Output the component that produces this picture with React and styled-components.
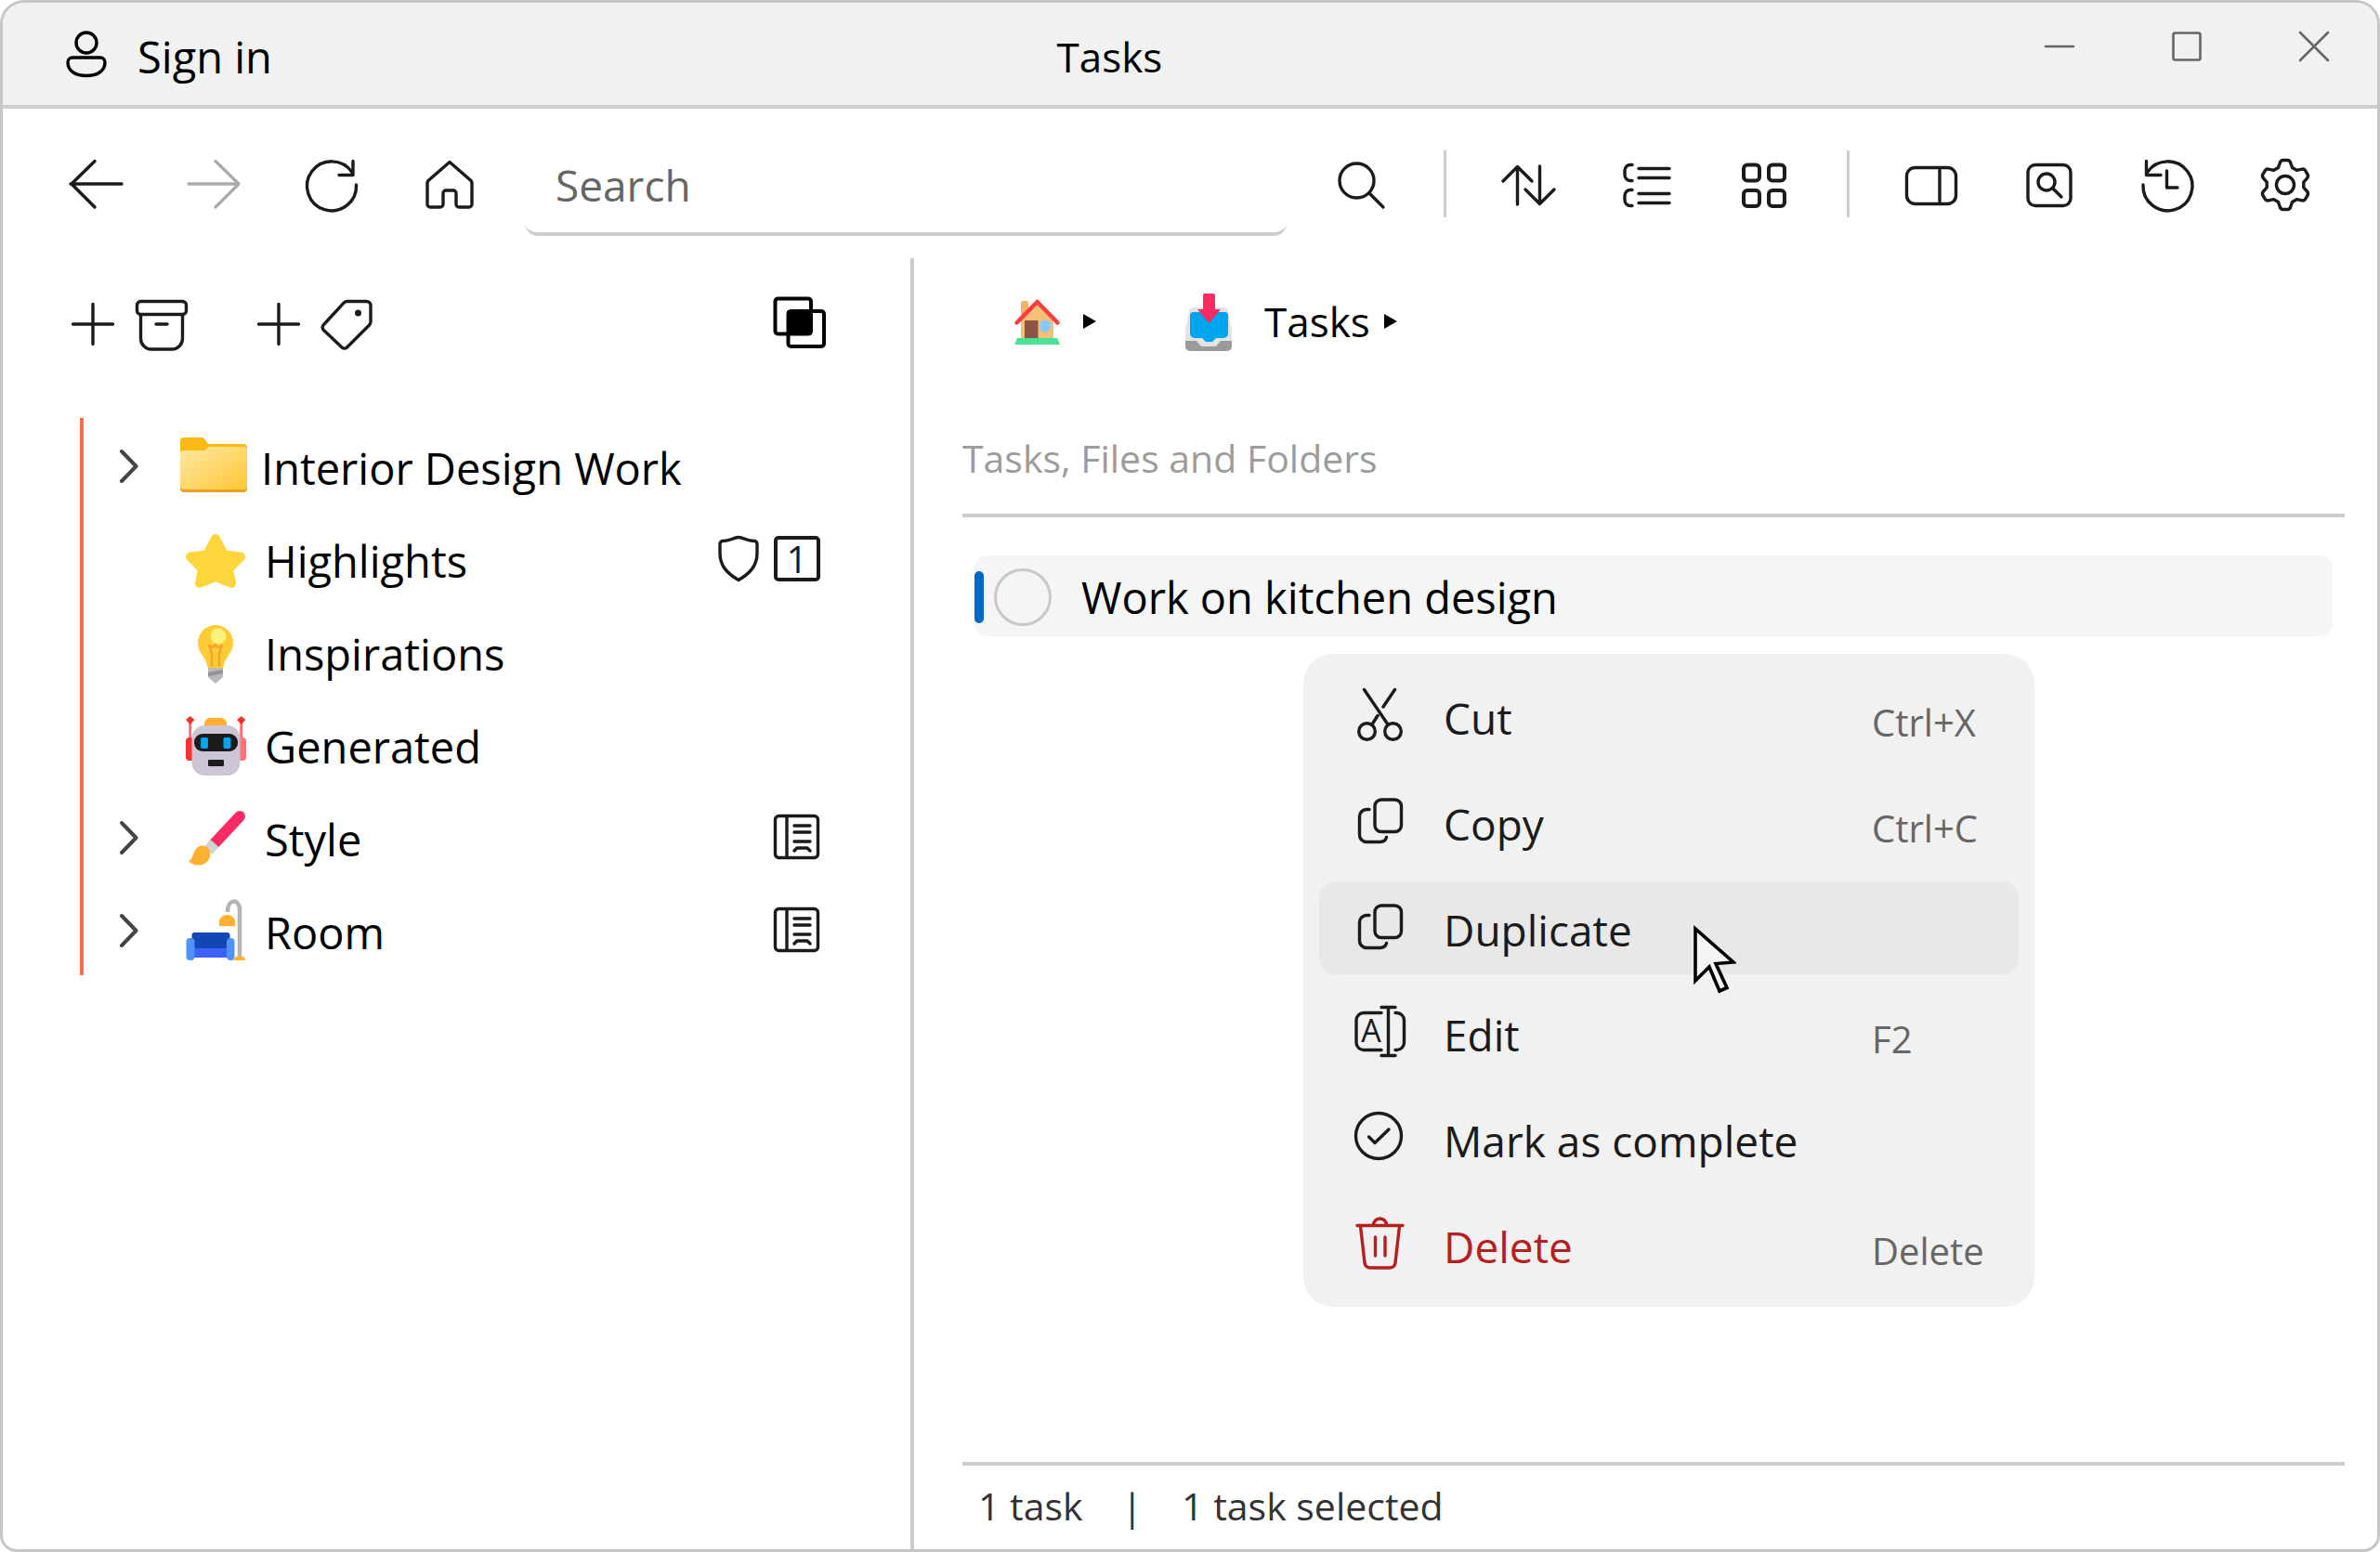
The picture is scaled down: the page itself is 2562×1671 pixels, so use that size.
import React from "react";
import styled, { createGlobalStyle } from "styled-components";

const color = {
  frame: "#c6c6c6",
  line: "#cdcdcd",
  chrome: "#f1f1f1",
  hover: "#e8e8e8",
  selected: "#f5f5f5",
  ink: "#1b1b1b",
  muted: "#666666",
  faint: "#9c9c9c",
  accent: "#0067c7",
  danger: "#b5201f",
  branch: "#fb6a50",
};

const text = {
  large: "47px",
  body: "46px",
  title: "44px",
  small: "41px",
  hint: "40px",
};

const GlobalStyle = createGlobalStyle`
  *, *::before, *::after { box-sizing: border-box; }
  body {
    margin: 0;
    background: #ffffff;
    color: #000000;
    font-family: "Open Sans", "Noto Sans", sans-serif;
    font-size: ${text.body};
    line-height: 60px;
  }
  button, input { font: inherit; color: inherit; }
  button { padding: 0; border: 0; background: none; text-align: left; cursor: pointer; }
  ul { margin: 0; padding: 0; list-style: none; }
`;

const Window = styled.div`
  display: flex;
  flex-direction: column;
  min-height: 100vh;
  border: 3px solid ${color.frame};
  border-radius: 26px 26px 18px 18px;
  background: #ffffff;
  overflow: hidden;
`;

/* ---------- icons ---------- */

const Glyph = styled.svg`
  display: block;
  flex: none;
  width: ${(p) => p.$w || 64}px;
  height: 64px;
  overflow: visible;
`;

const Line = ({ children, weight = 3.4 }) => (
  <Glyph
    viewBox="0 0 64 64"
    fill="none"
    stroke="currentColor"
    strokeWidth={weight}
    strokeLinecap="round"
    strokeLinejoin="round"
    aria-hidden="true"
  >
    {children}
  </Glyph>
);

const Emoji = ({ children, width = 80 }) => (
  <Glyph $w={width} viewBox={`0 0 ${width} 64`} aria-hidden="true">
    {children}
  </Glyph>
);

const UserIcon = () => (
  <Line>
    <circle cx="32" cy="20" r="11" />
    <path d="M17 36h30a5 5 0 0 1 5 5c0 10-9 14.500-20 14.500S12 51 12 41a5 5 0 0 1 5-5z" />
  </Line>
);
const MinimizeIcon = () => <Line weight={2.6}><path d="M17 32h30" /></Line>;
const MaximizeIcon = () => <Line weight={2.6}><rect x="17.500" y="17.500" width="29" height="29" rx="2" /></Line>;
const CloseIcon = () => <Line weight={2.6}><path d="M17 17l30 30M47 17L17 47" /></Line>;
const BackIcon = () => <Line><path d="M60 32H5M31 7.500L6 32l25 25" /></Line>;
const ForwardIcon = () => <Line><path d="M5 32h54M34 7.500L59 32 34 57" /></Line>;
const RefreshIcon = () => <Line><path d="M58.500 33a26.500 26.500 0 1 1-4.500-13.500M55 7.500v15H40" /></Line>;
const HomeIcon = () => (
  <Line>
    <path d="M32 8.500L9 28.500a4 4 0 0 0-1 3V54a3 3 0 0 0 3 3h11a3 3 0 0 0 3-3V42a3 3 0 0 1 3-3h8a3 3 0 0 1 3 3v12a3 3 0 0 0 3 3h11a3 3 0 0 0 3-3V31.500a4 4 0 0 0-1-3z" />
  </Line>
);
const SearchIcon = () => <Line><circle cx="27.500" cy="28.500" r="18.500" /><path d="M41 42l15 15" /></Line>;
const SortIcon = () => <Line><path d="M20.500 54V13.500M5 29l15.500-15.500L36 29M44.500 13v40.500M29 38l15.500 15.500L60 38" /></Line>;
const ListIcon = () => (
  <Line>
    <path d="M17 11.500h-2a6 6 0 0 0-6 6v5a6 6 0 0 0 6 6h2M17 38.500h-2a6 6 0 0 0-6 6v5a6 6 0 0 0 6 6h2M24 15.500h33M24 25.500h33M24 42.500h33M24 52.500h33" />
  </Line>
);
const GridIcon = () => (
  <Line weight={4}>
    <rect x="10" y="11.500" width="17" height="17" rx="4" />
    <rect x="37" y="11.500" width="17" height="17" rx="4" />
    <rect x="10" y="39" width="17" height="17" rx="4" />
    <rect x="37" y="39" width="17" height="17" rx="4" />
  </Line>
);
const PanelIcon = () => <Line><rect x="5.500" y="14.500" width="53" height="39" rx="9" /><path d="M41 15v38" /></Line>;
const FindIcon = () => (
  <Line>
    <rect x="9" y="11.500" width="46" height="44" rx="8" />
    <circle cx="29" cy="30" r="9" />
    <path d="M36 37l9 9" />
  </Line>
);
const HistoryIcon = () => <Line><path d="M6 33a26.500 26.500 0 1 0 4.500-13.500M9.500 7.500v15H25M31.500 18v18H43" /></Line>;

function mid(a, b, t) {
  const [ax, ay] = a.split(" ").map(Number);
  const [bx, by] = b.split(" ").map(Number);
  return `${(ax + (bx - ax) * t).toFixed(1)} ${(ay + (by - ay) * t).toFixed(1)}`;
}
const GEAR = (() => {
  const tooth = [[-7.5, -18.5], [-6, -23], [-5, -26.5], [5, -26.5], [6, -23], [7.5, -18.5]];
  let d = "";
  for (let i = 0; i < 6; i += 1) {
    const a = (i * Math.PI) / 3;
    const p = tooth.map(([x, y]) =>
      [32 + x * Math.cos(a) - y * Math.sin(a), 33 + x * Math.sin(a) + y * Math.cos(a)].map((n) => n.toFixed(1)).join(" ")
    );
    d += `${i ? "L" : "M"}${p[0]} L${p[1]} Q${p[2]} ${mid(p[2], p[3], 0.25)} L${mid(p[2], p[3], 0.75)} Q${p[3]} ${p[4]} L${p[5]} `;
  }
  return `${d}Z`;
})();
const GearIcon = () => <Line><path d={GEAR} /><circle cx="32" cy="33" r="9.500" /></Line>;

const PlusIcon = () => <Line><path d="M32 13.500v43M10.500 35h43" /></Line>;
const ArchiveIcon = () => (
  <Line>
    <rect x="5.500" y="10.500" width="53" height="14" rx="4" />
    <path d="M9.500 25v25.500a11.500 11.500 0 0 0 11.500 11.500h22a11.500 11.500 0 0 0 11.500-11.500V25M26 35h12" />
  </Line>
);
const TagIcon = () => (
  <Line>
    <path d="M31.500 10.500h21a4.500 4.500 0 0 1 4.500 4.500v17.500a5 5 0 0 1-1.500 3.500L31.500 60a4 4 0 0 1-5.500 0L6.500 41.500a4 4 0 0 1 0-6L28.500 11.700a4.500 4.500 0 0 1 3-1.200z" />
    <circle cx="43.500" cy="23" r="1.800" fill="currentColor" />
  </Line>
);
const OverlapIcon = () => (
  <Line weight={4}>
    <rect x="5.500" y="7.500" width="38.500" height="38" rx="3" />
    <rect x="19.500" y="21" width="38.500" height="38" rx="3" />
    <rect x="20" y="22" width="23" height="23" fill="currentColor" />
  </Line>
);
const ChevronIcon = () => <Line weight={4}><path d="M23 14L38.500 30 23 46" /></Line>;
const ShieldIcon = () => (
  <Line>
    <path d="M33 9.500c6 0 8 4 17 4a3 3 0 0 1 3 3v10c0 14-8 22-20 29-12-7-20-15-20-29v-10a3 3 0 0 1 3-3c9 0 11-4 17-4z" />
  </Line>
);
const BookIcon = () => (
  <Line>
    <rect x="8.500" y="9.500" width="46" height="45" rx="4" />
    <path d="M21 10v44M29 20h17M29 27h17M29 37h17M29 47l3-3h11l3 3" />
  </Line>
);
const CutIcon = () => (
  <Line>
    <circle cx="18.500" cy="48.500" r="8.800" />
    <circle cx="46.500" cy="48.500" r="8.800" />
    <path d="M15.500 3.500L41 41M48.500 3.500L36 22M30 31.500L24 41" />
  </Line>
);
const CopyIcon = () => (
  <Line>
    <rect x="27" y="8" width="28.500" height="34.500" rx="7" />
    <path d="M21 18.500h-3a7.500 7.500 0 0 0-7.500 7.500v20a7.500 7.500 0 0 0 7.500 7.500h14.500q5.500 0 7-5" />
  </Line>
);
const LetterA = styled.text`
  font-family: "Open Sans", sans-serif;
  font-size: 34px;
  fill: currentColor;
  stroke: none;
  text-anchor: middle;
`;
const RenameIcon = () => (
  <Line>
    <path d="M34 10.500H15a8 8 0 0 0-8 8v24a8 8 0 0 0 8 8h19M49 10.500h1.500a8 8 0 0 1 8 8v24a8 8 0 0 1-8 8H49M34 4.500h15M34 56.500h15M41.500 4.500v52" />
    <LetterA x="23" y="42">A</LetterA>
  </Line>
);
const CheckIcon = () => <Line><circle cx="31" cy="29" r="24.500" /><path d="M20.500 30l6.500 6.500L42 22" /></Line>;
const TrashIcon = () => (
  <Line>
    <path d="M8 11.500h49M25.500 11a7 7 0 0 1 14 0M11.500 12l4.500 39.500a6 6 0 0 0 6 5.500h21a6 6 0 0 0 6-5.500L53.500 12M27.500 24v20M38 24v20" />
  </Line>
);

/* ---------- emoji ---------- */

const FolderEmoji = () => (
  <Emoji width={76}>
    <defs>
      <linearGradient id="folderFront" x1="0" y1="0" x2="1" y2="1">
        <stop offset="0" stopColor="#ffe9a6" />
        <stop offset="1" stopColor="#ffc633" />
      </linearGradient>
    </defs>
    <path d="M2 3a4 4 0 0 1 4-4h19a4 4 0 0 1 3 1.500L32 6h38a4 4 0 0 1 4 4v20H2z" fill="#fbb917" />
    <path d="M2 17a4 4 0 0 1 4-4h22l5-4h37a4 4 0 0 1 4 4v41a4 4 0 0 1-4 4H6a4 4 0 0 1-4-4z" fill="#e9a21c" />
    <path d="M2 16a3 3 0 0 1 3-3h23l5-4h37a4 4 0 0 1 4 4v38a4 4 0 0 1-4 4H6a4 4 0 0 1-4-4z" fill="url(#folderFront)" />
  </Emoji>
);
const StarEmoji = () => (
  <Emoji>
    <path
      d="M40 8l9 17.500 18 2-13 13 3 15.500-17-7-17 7 3-15.500-13-13 18-2z"
      fill="#fed63b"
      stroke="#fed63b"
      strokeWidth="10"
      strokeLinejoin="round"
    />
  </Emoji>
);
const BulbEmoji = () => (
  <Emoji>
    <path d="M32 45h16v12l-8 7-8-7z" fill="#b9b9bd" />
    <path d="M32 52l16-3v4l-16 3z" fill="#929296" />
    <path d="M40 1a19 19 0 0 1 19 19c0 12-9 14-10.500 27h-17C30 34 21 32 21 20A19 19 0 0 1 40 1z" fill="#fdcb35" />
    <path d="M33 22l3 10v14M47 22l-3 10v14M33 22q3.500 6 7 0 3.500 6 7 0" fill="none" stroke="#f5a12c" strokeWidth="2.400" />
    <circle cx="43" cy="13" r="8.500" fill="#fff27a" />
  </Emoji>
);
const RobotEmoji = () => (
  <Emoji>
    <rect x="28" y="1" width="24" height="14" rx="6" fill="#ffb02e" />
    <path d="M12.700 3v24M67.700 3v24" stroke="#fb6f74" strokeWidth="3" />
    <path d="M8 3l4.700-4 4.700 4-4.700 5zM63 3l4.700-4 4.700 4-4.700 5z" fill="#f8312f" />
    <rect x="8" y="22" width="14" height="25" rx="4" fill="#f8312f" />
    <rect x="59" y="22" width="14" height="25" rx="4" fill="#ff7277" />
    <rect x="14.500" y="9" width="52" height="54" rx="14" fill="#cdc4d6" />
    <rect x="17" y="18" width="47" height="19" rx="9" fill="#1c1c1c" />
    <rect x="24" y="22" width="8" height="12" rx="2" fill="#00a6ed" />
    <rect x="48.500" y="22" width="8" height="12" rx="2" fill="#00a6ed" />
    <rect x="32" y="46" width="17" height="7" rx="1" fill="#1c1c1c" />
  </Emoji>
);
const BrushEmoji = () => (
  <Emoji>
    <path d="M66 7L38 37" stroke="#fc2b62" strokeWidth="12" strokeLinecap="round" />
    <path d="M39 36l-7 8" stroke="#d3d3d3" strokeWidth="12" />
    <path d="M11 55c6-2 4-13 12-16 7-2 13 4 11 11-2 10-16 13-23 5z" fill="#ffb02e" />
  </Emoji>
);
const SofaEmoji = () => (
  <Emoji>
    <path d="M53 10c0-15 12-14 13-4v52" fill="none" stroke="#b4b4b8" strokeWidth="4.500" />
    <path d="M44 25v-6a9 9 0 0 1 17 0v6z" fill="#ffb02e" />
    <path d="M60 62a6 5 0 0 1 12 0z" fill="#ffb02e" />
    <rect x="14.500" y="32" width="41" height="22" rx="3" fill="#1347b5" />
    <rect x="14.500" y="49" width="41" height="10" fill="#3f5fff" />
    <rect x="8.500" y="38" width="9" height="24" rx="4" fill="#5092ff" />
    <rect x="52" y="38" width="8.500" height="24" rx="4" fill="#5092ff" />
  </Emoji>
);
const HouseEmoji = () => (
  <Emoji width={64}>
    <rect x="15" y="10" width="8" height="22" rx="2" fill="#f3b56a" />
    <path d="M15 32l17.500-19L50 32v20H15z" fill="#f5bf79" />
    <path d="M10.500 33.500l22-22.500 22 22.500" fill="none" stroke="#fb3d3d" strokeWidth="4.500" strokeLinecap="round" strokeLinejoin="round" />
    <rect x="19" y="31" width="14.500" height="20" fill="#8c5543" />
    <ellipse cx="41" cy="37" rx="6" ry="6.500" fill="#83cbff" />
    <path d="M8 57l3-7h43l3 7z" fill="#48e394" />
  </Emoji>
);
const InboxEmoji = () => (
  <Emoji width={64}>
    <rect x="7" y="38" width="50" height="26" rx="5" fill="#9b9b9b" />
    <path d="M7 42l4-21a5 5 0 0 1 5-4h32a5 5 0 0 1 5 4l4 21v11H45l-5 6H24l-5-6H7z" fill="#e3e3e3" />
    <path d="M16 22h33a4 4 0 0 1 4 4v19a5 5 0 0 1-5 5h-8l-4 4h-7l-4-4h-8a5 5 0 0 1-5-5V26a4 4 0 0 1 4-4z" fill="#00a6ed" />
    <path d="M26 4a2 2 0 0 1 2-2h9a2 2 0 0 1 2 2v15h6L32.500 34 20 19h6z" fill="#fc2b62" />
  </Emoji>
);

/* ---------- title bar ---------- */

const TitleBar = styled.header`
  display: flex;
  align-items: center;
  height: 114px;
  border-bottom: 4px solid ${color.line};
  background: ${color.chrome};
`;
const SignIn = styled.button`
  display: flex;
  align-items: center;
  gap: 23px;
  padding-left: 58px;
`;
const TitleText = styled.span`
  padding-top: 6px;
  font-size: ${text.large};
`;
const WindowTitle = styled.h1`
  flex: 1;
  margin: 0;
  padding: 6px 52px 0 0;
  font-size: ${text.title};
  font-weight: 400;
  text-align: center;
`;
const WindowControls = styled.div`
  display: flex;
  align-self: flex-start;
`;
const ControlButton = styled.button`
  display: grid;
  place-items: center;
  width: 137px;
  height: 94px;
  color: #666666;
`;

/* ---------- toolbar ---------- */

const Toolbar = styled.nav`
  display: flex;
  align-items: center;
  height: 161px;
  padding: 0 36px;
`;
const ToolButton = styled.button`
  display: grid;
  place-items: center;
  flex: none;
  width: 127px;
  height: 96px;
  color: ${color.ink};
  &:disabled { color: #ababab; }
`;
const Divider = styled.span`
  flex: none;
  width: 3px;
  height: 72px;
  margin: 0 24px 0 26px;
  background: ${color.line};
`;
const SearchField = styled.input`
  flex: 1;
  min-width: 0;
  height: 112px;
  margin: 0 16px 0 18px;
  padding: 6px 33px 0;
  border: 0 solid ${color.line};
  border-bottom-width: 4px;
  border-radius: 14px;
  background: transparent;
  outline: none;
  &::placeholder { color: ${color.muted}; opacity: 1; }
`;

/* ---------- body ---------- */

const Body = styled.div`
  display: grid;
  grid-template-columns: 981fr 1575fr;
  flex: 1;
`;
const Sidebar = styled.aside`
  border-right: 4px solid ${color.line};
`;
const SidebarTools = styled.div`
  display: flex;
  align-items: center;
  gap: 62px;
  height: 136px;
  margin-bottom: 36px;
  padding: 0 87px 0 65px;
  color: ${color.ink};
`;
const AddButton = styled.button`
  display: flex;
  align-items: center;
  gap: 10px;
`;
const FilterButton = styled.button`
  margin-left: auto;
  color: #000000;
`;
const Tree = styled.ul`
  margin: 0 90px 0 83px;
  border-left: 4px solid ${color.branch};
`;
const TreeRow = styled.li`
  display: flex;
  align-items: center;
  height: 100px;
  padding: 8px 0 0 18px;
`;
const Expander = styled.button`
  width: 64px;
  height: 64px;
  margin-right: 20px;
  color: #444444;
`;
const ExpanderSpace = styled.span`
  width: 64px;
  margin-right: 20px;
`;
const TreeLink = styled.a`
  display: flex;
  align-items: center;
  flex: 1;
  gap: 13px;
  color: inherit;
  font-size: ${text.large};
  text-decoration: none;
  white-space: nowrap;
`;
const Badges = styled.div`
  display: flex;
  align-items: center;
  padding-bottom: 6px;
  color: ${color.ink};
`;
const CountBadge = styled.span`
  width: 50px;
  height: 49px;
  margin: 0 7px;
  border: 4px solid ${color.ink};
  border-radius: 5px;
  font-size: ${text.hint};
  line-height: 41px;
  text-align: center;
`;

const Main = styled.main`
  position: relative;
  display: flex;
  flex-direction: column;
  padding: 0 35px 0 52px;
`;
const Breadcrumbs = styled.nav`
  display: flex;
  align-items: center;
  gap: 88px;
  height: 136px;
  padding-left: 48px;
  font-size: ${text.title};
`;
const Crumb = styled.a`
  display: flex;
  align-items: center;
  gap: ${(p) => p.$gap}px;
  color: inherit;
  text-decoration: none;
`;
const CrumbLabel = styled.span`
  display: flex;
  align-items: center;
  gap: 14px;
`;
const Arrow = styled.svg`
  width: 16px;
  height: 20px;
`;
const SectionTitle = styled.h2`
  margin: 0;
  padding: 49px 0 30px;
  border-bottom: 4px solid ${color.line};
  color: ${color.faint};
  font-size: ${text.small};
  font-weight: 400;
`;
const TaskList = styled.ul`
  flex: 1;
  padding: 41px 13px 0;
`;
const TaskRow = styled.li`
  display: flex;
  align-items: center;
  height: 87px;
  padding-top: 3px;
  border-radius: 14px;
  background: ${color.selected};
  font-size: ${text.large};
`;
const SelectionBar = styled.span`
  width: 10px;
  height: 56px;
  margin-right: 11px;
  border-radius: 5px;
  background: ${color.accent};
`;
const TaskCheck = styled.input`
  appearance: none;
  width: 62px;
  height: 62px;
  margin: 0 32px 0 0;
  border: 3px solid #c8c8c8;
  border-radius: 50%;
`;
const StatusBar = styled.footer`
  display: flex;
  align-items: center;
  gap: 42px;
  height: 94px;
  padding: 0 0 5px 17px;
  border-top: 4px solid ${color.line};
  color: #333333;
  font-size: ${text.small};
`;

/* ---------- context menu ---------- */

const Menu = styled.div`
  position: absolute;
  top: 426px;
  left: 419px;
  display: grid;
  grid-auto-rows: 1fr;
  gap: 14px;
  width: 787px;
  min-height: 703px;
  padding: 17px;
  border-radius: 32px;
  background: ${color.chrome};
`;
const MenuItem = styled.button`
  display: flex;
  align-items: center;
  gap: 37px;
  padding-left: 33px;
  border-radius: 18px;
  background: ${(p) => (p.$active ? color.hover : "transparent")};
  color: ${(p) => (p.$danger ? color.danger : color.ink)};
`;
const MenuLabel = styled.span`
  flex: 1;
  padding-top: 4px;
`;
const Shortcut = styled.kbd`
  width: 158px;
  margin-left: -37px;
  padding-top: 14px;
  color: ${color.muted};
  font-family: inherit;
  font-size: ${text.hint};
`;
const Pointer = styled.svg`
  position: absolute;
  top: 717px;
  left: 837px;
  width: 48px;
  height: 78px;
  pointer-events: none;
`;

const folders = [
  { name: "Interior Design Work", emoji: <FolderEmoji />, open: true },
  { name: "Highlights", emoji: <StarEmoji />, shield: true, count: 1 },
  { name: "Inspirations", emoji: <BulbEmoji /> },
  { name: "Generated", emoji: <RobotEmoji /> },
  { name: "Style", emoji: <BrushEmoji />, open: true, book: true },
  { name: "Room", emoji: <SofaEmoji />, open: true, book: true },
];

const actions = [
  { label: "Cut", icon: <CutIcon />, keys: "Ctrl+X" },
  { label: "Copy", icon: <CopyIcon />, keys: "Ctrl+C" },
  { label: "Duplicate", icon: <CopyIcon />, active: true },
  { label: "Edit", icon: <RenameIcon />, keys: "F2" },
  { label: "Mark as complete", icon: <CheckIcon /> },
  { label: "Delete", icon: <TrashIcon />, keys: "Delete", danger: true },
];

const CrumbArrow = () => (
  <Arrow viewBox="0 0 16 20" aria-hidden="true">
    <path d="M1 2l14 8-14 8z" fill="#000000" />
  </Arrow>
);

const Tool = ({ label, icon, disabled }) => (
  <ToolButton type="button" aria-label={label} disabled={disabled}>
    {icon}
  </ToolButton>
);

export default function App() {
  return (
    <>
      <GlobalStyle />
      <Window>
        <TitleBar>
          <SignIn type="button">
            <UserIcon />
            <TitleText>Sign in</TitleText>
          </SignIn>
          <WindowTitle>Tasks</WindowTitle>
          <WindowControls>
            <ControlButton type="button" aria-label="Minimize"><MinimizeIcon /></ControlButton>
            <ControlButton type="button" aria-label="Maximize"><MaximizeIcon /></ControlButton>
            <ControlButton type="button" aria-label="Close"><CloseIcon /></ControlButton>
          </WindowControls>
        </TitleBar>

        <Toolbar>
          <Tool label="Back" icon={<BackIcon />} />
          <Tool label="Forward" icon={<ForwardIcon />} disabled />
          <Tool label="Refresh" icon={<RefreshIcon />} />
          <Tool label="Home" icon={<HomeIcon />} />
          <SearchField type="text" placeholder="Search" aria-label="Search" />
          <Tool label="Run search" icon={<SearchIcon />} />
          <Divider />
          <Tool label="Sort" icon={<SortIcon />} />
          <Tool label="List view" icon={<ListIcon />} />
          <Tool label="Grid view" icon={<GridIcon />} />
          <Divider />
          <Tool label="Side panel" icon={<PanelIcon />} />
          <Tool label="Find" icon={<FindIcon />} />
          <Tool label="History" icon={<HistoryIcon />} />
          <Tool label="Settings" icon={<GearIcon />} />
        </Toolbar>

        <Body>
          <Sidebar>
            <SidebarTools>
              <AddButton type="button" aria-label="Add folder"><PlusIcon /><ArchiveIcon /></AddButton>
              <AddButton type="button" aria-label="Add tag"><PlusIcon /><TagIcon /></AddButton>
              <FilterButton type="button" aria-label="Intersect"><OverlapIcon /></FilterButton>
            </SidebarTools>
            <Tree>
              {folders.map((f) => (
                <TreeRow key={f.name}>
                  {f.open ? (
                    <Expander type="button" aria-label={`Expand ${f.name}`}><ChevronIcon /></Expander>
                  ) : (
                    <ExpanderSpace />
                  )}
                  <TreeLink href="#">
                    {f.emoji}
                    {f.name}
                  </TreeLink>
                  <Badges>
                    {f.shield && <ShieldIcon />}
                    {f.count && <CountBadge>{f.count}</CountBadge>}
                    {f.book && <BookIcon />}
                  </Badges>
                </TreeRow>
              ))}
            </Tree>
          </Sidebar>

          <Main>
            <Breadcrumbs>
              <Crumb href="#" $gap={17} aria-label="Home">
                <HouseEmoji />
                <CrumbArrow />
              </Crumb>
              <Crumb href="#" $gap={28}>
                <InboxEmoji />
                <CrumbLabel>
                  Tasks
                  <CrumbArrow />
                </CrumbLabel>
              </Crumb>
            </Breadcrumbs>
            <SectionTitle>Tasks, Files and Folders</SectionTitle>
            <TaskList>
              <TaskRow>
                <SelectionBar />
                <TaskCheck type="checkbox" id="task-1" />
                <label htmlFor="task-1">Work on kitchen design</label>
              </TaskRow>
            </TaskList>
            <StatusBar>
              <span>1 task</span>
              <span>|</span>
              <span>1 task selected</span>
            </StatusBar>

            <Menu role="menu">
              {actions.map((a) => (
                <MenuItem key={a.label} type="button" role="menuitem" $active={a.active} $danger={a.danger}>
                  {a.icon}
                  <MenuLabel>{a.label}</MenuLabel>
                  {a.keys && <Shortcut>{a.keys}</Shortcut>}
                </MenuItem>
              ))}
            </Menu>
            <Pointer viewBox="0 0 48 78" aria-hidden="true">
              <path
                d="M4 5v56l15-15 11 26 8-3.500L26 42.500l19-1.500z"
                fill="#f4f4f4"
                stroke="#000000"
                strokeWidth="3.600"
                strokeLinejoin="miter"
              />
            </Pointer>
          </Main>
        </Body>
      </Window>
    </>
  );
}
